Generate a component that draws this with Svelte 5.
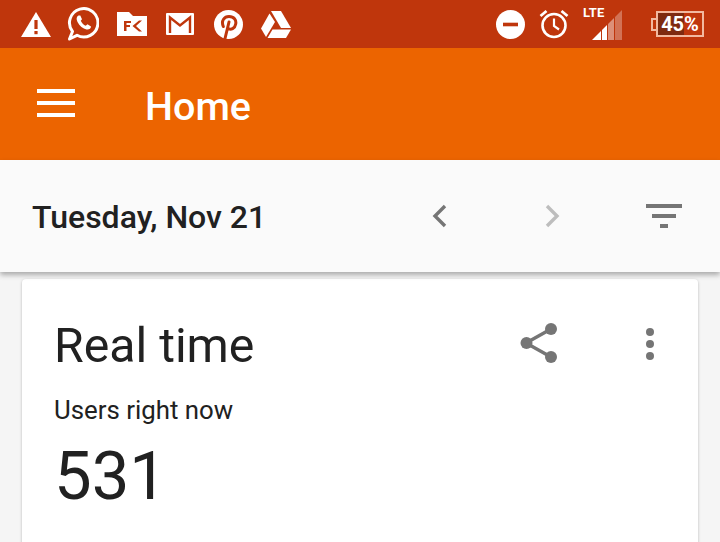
<script>
	const rightIconColor = '#757575';
</script>

<div class="screen">
	<div class="status">
		<div class="group left">
			<!-- warning -->
			<svg class="ic" style="margin-left:20px" width="32" height="28" viewBox="0 0 32 28">
				<path d="M16 2 L31 27 H1 Z" fill="#fff" />
				<rect x="14.4" y="10" width="3.2" height="9" fill="#bf360c" />
				<rect x="14.4" y="21" width="3.2" height="3.2" fill="#bf360c" />
			</svg>
			<!-- whatsapp -->
			<svg class="ic" style="margin-left:15px" width="32" height="34" viewBox="0 0 32 34">
				<path d="M5.5 24.5 A14.2 14.2 0 1 1 10 28.3 L2.5 32 Z" fill="none" stroke="#fff" stroke-width="3" stroke-linejoin="round" />
				<path d="M11.5 8.5 C9.5 9.5 9 12 10.5 15 C12.5 19 16 21.5 19.5 22.5 C22 23 24 21.5 24 19.5 L20.5 17.3 L18.7 18.8 C16.5 18 14.7 16 13.8 13.8 L15 12.2 L13.3 8.5 Z" fill="#fff" />
			</svg>
			<!-- flipkart folder -->
			<svg class="ic" style="margin-left:18px" width="30" height="24" viewBox="0 0 30 24">
				<path d="M0 0 H12 L16 4 H30 V24 H0 Z" fill="#fff" />
				<path d="M7 9 H14 V11 H9.5 V13 H13 V15 H9.5 V19 H7 Z" fill="#bf360c" />
				<path d="M22 8.5 L15.5 14 L22 19.5 H25 L19 14 L25 8.5 Z" fill="#bf360c" />
			</svg>
			<!-- gmail -->
			<svg class="ic" style="margin-left:19px" width="28" height="22" viewBox="0 0 28 22">
				<rect width="28" height="22" rx="1" fill="#fff" />
				<path d="M4 20 V4.5 L14 12.5 L24 4.5 V20" fill="none" stroke="#bf360c" stroke-width="2.4" />
			</svg>
			<!-- pinterest -->
			<svg class="ic" style="margin-left:20px" width="29" height="29" viewBox="0 0 29 29">
				<circle cx="14.5" cy="14.5" r="14.5" fill="#fff" />
				<path d="M11 28.5 L15 12 M9.3 16.5 C6.8 10.5 10.5 6.5 15 6.5 C20 6.5 22.5 10 21.7 14 C21 18.3 17 20.5 13.5 18.3" fill="none" stroke="#bf360c" stroke-width="3" stroke-linecap="round" />
			</svg>
			<!-- drive -->
			<svg class="ic" style="margin-left:18px" width="30" height="27" viewBox="0 0 30 27">
				<path d="M10 0 H20 L30 17 H20 Z" fill="#fff" />
				<path d="M8.5 2.5 L14 11 L5 26 L0 17.5 Z" fill="#fff" />
				<path d="M11.5 18.5 H30 L25 27 H6.5 Z" fill="#fff" />
			</svg>
		</div>
		<div class="group right">
			<!-- dnd -->
			<svg class="ic" width="29" height="29" viewBox="0 0 29 29">
				<circle cx="14.5" cy="14.5" r="14.5" fill="#fff" />
				<rect x="7" y="12.7" width="15" height="3.6" fill="#bf360c" />
			</svg>
			<!-- alarm -->
			<svg class="ic" style="margin-left:14px" width="30" height="30" viewBox="0 0 30 30">
				<circle cx="15" cy="16.5" r="11.5" fill="none" stroke="#fff" stroke-width="2.6" />
				<path d="M15 9.5 V17 L20 20.5" fill="none" stroke="#fff" stroke-width="2.2" />
				<path d="M1.5 7 L7.5 2 M28.5 7 L22.5 2" fill="none" stroke="#fff" stroke-width="2.8" />
			</svg>
			<!-- signal -->
			<div class="signal">
				<span class="lte">LTE</span>
				<svg width="30" height="31" viewBox="0 0 30 31">
					<path d="M0 31 L9 22 V31 Z" fill="#fff" />
					<path d="M10 21 L15 16 V31 H10 Z" fill="#fff" />
					<path d="M16 15 L22 9 V31 H16 Z" fill="#fff" opacity="0.45" />
					<path d="M23 8 L30 1 V31 H23 Z" fill="#fff" opacity="0.3" />
				</svg>
			</div>
			<!-- battery -->
			<div class="battery">
				<span class="nub"></span>
				<div class="cell">45%</div>
			</div>
		</div>
	</div>

	<header class="toolbar">
		<div class="menu"><span></span><span></span><span></span></div>
		<h1>Home</h1>
	</header>

	<div class="datebar">
		<div class="date">Tuesday, Nov 21</div>
		<svg class="prev" width="16" height="24" viewBox="0 0 16 24">
			<path d="M14 2 L4 12 L14 22" fill="none" stroke={rightIconColor} stroke-width="3.4" />
		</svg>
		<svg class="next" width="16" height="24" viewBox="0 0 16 24">
			<path d="M2 2 L12 12 L2 22" fill="none" stroke="#bdbdbd" stroke-width="3.4" />
		</svg>
		<div class="filter"><span></span><span></span><span></span></div>
	</div>

	<main class="content">
		<section class="card">
			<div class="card-head">
				<h2>Real time</h2>
				<svg class="share" width="38" height="40" viewBox="0 0 38 40">
					<path d="M6 20 L31 6 M6 20 L31 34" stroke={rightIconColor} stroke-width="3.4" fill="none" />
					<circle cx="6.5" cy="20" r="6" fill={rightIconColor} />
					<circle cx="31" cy="6" r="6" fill={rightIconColor} />
					<circle cx="31" cy="34" r="6" fill={rightIconColor} />
				</svg>
				<div class="dots"><span></span><span></span><span></span></div>
			</div>
			<p class="label">Users right now</p>
			<p class="count">531</p>
		</section>
	</main>
</div>

<style>
	:global(body) {
		margin: 0;
	}

	.screen {
		width: 720px;
		height: 542px;
		overflow: hidden;
		background: #f5f5f5;
		font-family: Roboto, "Liberation Sans", sans-serif;
		position: relative;
	}

	.status {
		height: 48px;
		background: #bf360c;
		display: flex;
		align-items: center;
		justify-content: space-between;
	}

	.group {
		display: flex;
		align-items: center;
	}

	.ic {
		display: block;
		flex: none;
	}

	.right {
		padding-right: 16px;
	}

	.signal {
		position: relative;
		width: 30px;
		height: 40px;
		margin-left: 23px;
		margin-bottom: 8px;
	}

	.signal svg {
		position: absolute;
		right: 0;
		bottom: 0;
		display: block;
	}

	.lte {
		position: absolute;
		left: -9px;
		top: 5px;
		font-size: 13px;
		font-weight: 700;
		color: #fff;
		letter-spacing: 0.2px;
	}

	.battery {
		display: flex;
		align-items: center;
		margin-left: 29px;
	}

	.nub {
		width: 5px;
		height: 13px;
		border: 2px solid #f2b9a0;
		border-right: none;
		background: #bf360c;
		box-sizing: border-box;
	}

	.cell {
		width: 48px;
		height: 26px;
		box-sizing: border-box;
		border: 2px solid #f2b9a0;
		background: linear-gradient(90deg, #7e2a10 0 58%, #bf360c 58%);
		color: #fff;
		font-size: 20px;
		font-weight: 700;
		line-height: 22px;
		text-align: center;
	}

	.toolbar {
		height: 112px;
		background: #ec6400;
		display: flex;
		align-items: center;
		padding-left: 37px;
		box-sizing: border-box;
	}

	.menu {
		width: 38px;
		display: flex;
		flex-direction: column;
		gap: 8px;
		margin-top: -2px;
	}

	.menu span {
		height: 4px;
		background: #fff;
	}

	h1 {
		margin: 4px 0 0 70px;
		font-size: 39.5px;
		font-weight: 500;
		color: #fff;
	}

	.datebar {
		height: 112px;
		background: #fafafa;
		display: flex;
		align-items: center;
		padding-left: 32px;
		box-sizing: border-box;
		box-shadow: 0 3px 5px rgba(0, 0, 0, 0.3);
		position: relative;
		z-index: 1;
	}

	.date {
		width: 399px;
		flex: none;
		font-size: 32px;
		font-weight: 500;
		color: #212121;
		margin-top: 2px;
	}

	.prev {
		margin-top: -1px;
	}

	.next {
		margin-left: 98px;
		margin-top: -1px;
	}

	.filter {
		margin-left: 85px;
		margin-top: -1px;
		display: flex;
		flex-direction: column;
		align-items: center;
		gap: 6px;
	}

	.filter span {
		height: 4px;
		background: #757575;
		width: 36px;
	}

	.filter span:nth-child(2) {
		width: 24px;
	}

	.filter span:nth-child(3) {
		width: 8px;
	}

	.content {
		padding: 7px 22px 0;
	}

	.card {
		background: #fff;
		border-radius: 4px;
		box-shadow: 0 1px 3px rgba(0, 0, 0, 0.25);
		height: 300px;
		box-sizing: border-box;
		padding: 36px 32px 0;
	}

	.card-head {
		display: flex;
		align-items: center;
		height: 60px;
	}

	h2 {
		margin: 0;
		font-size: 48.2px;
		font-weight: 400;
		color: #212121;
		flex: 1;
	}

	.share {
		margin-right: 88px;
		margin-top: -4px;
	}

	.dots {
		display: flex;
		flex-direction: column;
		gap: 4px;
		margin-right: 12px;
		margin-top: -3px;
	}

	.dots span {
		width: 8px;
		height: 8px;
		border-radius: 50%;
		background: #757575;
	}

	.label {
		margin: 20px 0 0;
		font-size: 25.8px;
		color: #212121;
	}

	.count {
		margin: 10px 0 0;
		font-size: 67px;
		font-weight: 400;
		color: #212121;
		line-height: 82px;
	}
</style>
